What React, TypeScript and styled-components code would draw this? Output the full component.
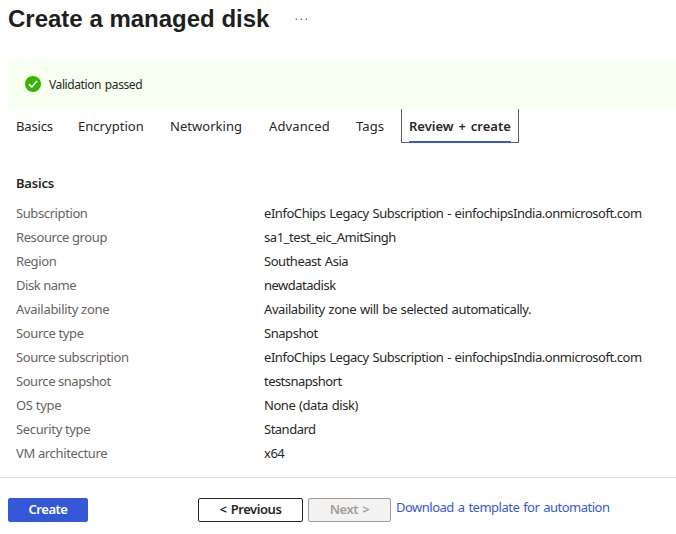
import React from "react";
import styled, { createGlobalStyle } from "styled-components";

const GlobalStyle = createGlobalStyle`
  * { box-sizing: border-box; }
  body {
    margin: 0;
    background: #fff;
    color: #292827;
    font: 13px/24px "Segoe UI", "Noto Sans", sans-serif;
    overflow: hidden;
  }
`;

const Page = styled.main`
  display: flex;
  flex-direction: column;
  height: 534px;
`;

const Header = styled.header`
  display: flex;
  align-items: center;
  gap: 26px;
  height: 38px;
  padding-left: 8px;
`;

const Title = styled.h1`
  margin: 0;
  font: bold 24px/28px "Liberation Sans", Arial, sans-serif;
  color: #201f1e;
  white-space: nowrap;
`;

const Banner = styled.div`
  display: flex;
  align-items: center;
  gap: 8px;
  height: 50px;
  margin: 21px 0 0 8px;
  padding-left: 17px;
  background: #f6fff0;
  font-size: 12px;
  letter-spacing: -0.4px;
  word-spacing: 1px;
`;

const BannerText = styled.span`
  padding-top: 2px;
`;

const Tabs = styled.nav`
  display: flex;
  height: 34px;
  padding-left: 8px;
`;

const Tab = styled.div<{ $width: number; $tracking?: number; $active?: boolean }>`
  width: ${(p) => p.$width}px;
  height: 34px;
  padding: ${(p) => (p.$active ? "0 7px" : "0 8px")};
  border: ${(p) => (p.$active ? "1px solid #605e5c" : "none")};
  border-top: 0;
  line-height: 34px;
  font-weight: ${(p) => (p.$active ? 600 : 400)};
  letter-spacing: ${(p) => p.$tracking ?? 0}px;
  white-space: nowrap;
`;

const TabLabel = styled.span`
  display: block;
  height: 34px;
  border-bottom: 2px solid #3558d8;
  word-spacing: 1.5px;
`;

const SectionTitle = styled.h2`
  margin: 28px 0 6px 16px;
  font-size: 13px;
  font-weight: 600;
  line-height: 24px;
  letter-spacing: -0.2px;
`;

const Details = styled.dl`
  display: grid;
  grid-template-columns: 248px 1fr;
  grid-auto-rows: 24px;
  margin: 0;
  padding-left: 16px;
  white-space: nowrap;
`;

const Term = styled.dt<{ $tracking?: number }>`
  color: #666462;
  letter-spacing: ${(p) => p.$tracking ?? 0}px;
`;

const Value = styled.dd<{ $tracking?: number }>`
  margin: 0;
  letter-spacing: ${(p) => p.$tracking ?? 0}px;
  word-spacing: 0.8px;
`;

const Footer = styled.footer`
  display: flex;
  align-items: flex-start;
  height: 57px;
  margin-top: 12px;
  padding: 20px 0 0 8px;
  border-top: 1px solid #dddcdb;
`;

const variants = {
  primary: "background: #3558d8; border-color: #3558d8; color: #fff;",
  outline: "background: #fff; border-color: #292827; color: #292827;",
  disabled: "background: #f3f2f1; border-color: #a19f9d; color: #a19f9d;",
};

const Button = styled.button<{ $width: number; $variant: keyof typeof variants }>`
  width: ${(p) => p.$width}px;
  height: 24px;
  padding: 0 0 2px;
  border: 1px solid;
  border-radius: 2px;
  font: 600 13px/20px "Segoe UI", "Noto Sans", sans-serif;
  letter-spacing: -0.45px;
  word-spacing: 1.2px;
  ${(p) => variants[p.$variant]}
`;

const Paging = styled.div`
  display: flex;
  gap: 5px;
  margin: 0 5px 0 110px;
`;

const DownloadLink = styled.a`
  color: #3558d8;
  line-height: 18px;
  letter-spacing: -0.5px;
  word-spacing: 1px;
  white-space: nowrap;
`;

const tabs: [string, number, number][] = [
  ["Basics", 62, -0.15],
  ["Encryption", 92, 0.03],
  ["Networking", 99, 0.03],
  ["Advanced", 87, 0.12],
  ["Tags", 53, 0.1],
];

const subscription = "eInfoChips Legacy Subscription - einfochipsIndia.onmicrosoft.com";

const details: [string, string, number, number][] = [
  ["Subscription", subscription, -0.4, -0.45],
  ["Resource group", "sa1_test_eic_AmitSingh", -0.4, -0.42],
  ["Region", "Southeast Asia", -0.4, -0.47],
  ["Disk name", "newdatadisk", -0.45, -0.5],
  ["Availability zone", "Availability zone will be selected automatically.", -0.3, -0.41],
  ["Source type", "Snapshot", -0.37, -0.45],
  ["Source subscription", subscription, -0.42, -0.45],
  ["Source snapshot", "testsnapshort", -0.45, -0.55],
  ["OS type", "None (data disk)", -0.3, -0.45],
  ["Security type", "Standard", -0.36, -0.5],
  ["VM architecture", "x64", -0.35, -0.5],
];

export default function App() {
  return (
    <Page>
      <GlobalStyle />
      <Header>
        <Title>Create a managed disk</Title>
        <svg width="12" height="4" viewBox="0 0 12 4" fill="#605e5c">
          <rect x="0.7" y="1.5" width="1.3" height="1.4" />
          <rect x="5.7" y="1.5" width="1.3" height="1.4" />
          <rect x="10.7" y="1.5" width="1.3" height="1.4" />
        </svg>
      </Header>
      <Banner>
        <svg width="16" height="16" viewBox="0 0 16 16">
          <circle cx="8" cy="8" r="8" fill="#38b500" />
          <path d="M4 8.3 6.8 11l5.2-6" fill="none" stroke="#fff" strokeWidth="1.8" />
        </svg>
        <BannerText>Validation passed</BannerText>
      </Banner>
      <Tabs>
        {tabs.map(([label, width, tracking]) => (
          <Tab key={label} $width={width} $tracking={tracking}>{label}</Tab>
        ))}
        <Tab $width={118} $active>
          <TabLabel>Review + create</TabLabel>
        </Tab>
      </Tabs>
      <SectionTitle>Basics</SectionTitle>
      <Details>
        {details.map(([term, value, termTracking, valueTracking]) => (
          <React.Fragment key={term}>
            <Term $tracking={termTracking}>{term}</Term>
            <Value $tracking={valueTracking}>{value}</Value>
          </React.Fragment>
        ))}
      </Details>
      <Footer>
        <Button $width={80} $variant="primary">Create</Button>
        <Paging>
          <Button $width={105} $variant="outline">&lt; Previous</Button>
          <Button $width={83} $variant="disabled" disabled>Next &gt;</Button>
        </Paging>
        <DownloadLink>Download a template for automation</DownloadLink>
      </Footer>
    </Page>
  );
}
